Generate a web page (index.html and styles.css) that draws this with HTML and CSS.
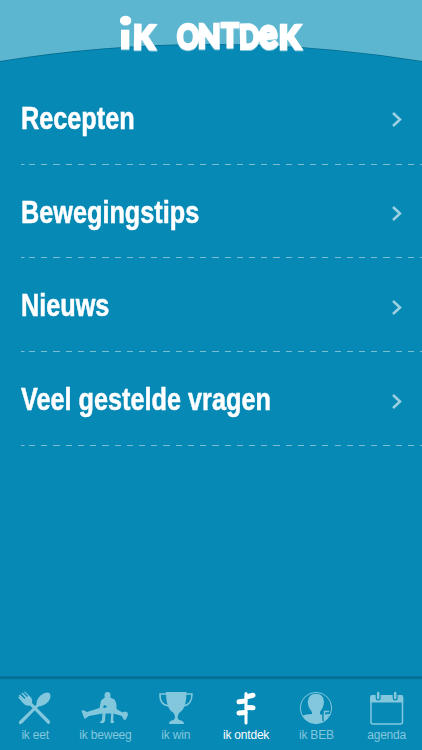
FILE: index.html
```
<!DOCTYPE html>
<html lang="nl">
<head>
<meta charset="utf-8">
<title>ik ontdek</title>
<link rel="stylesheet" href="styles.css">
</head>
<body>
<div class="app">
  <header class="header">
    <svg width="422" height="70" viewBox="0 0 422 70">
      <path class="curve-shadow" d="M0 0H422V61.8Q211 27.8 0 61.8Z"/>
      <path class="curve" d="M0 0H422V61Q211 27 0 61Z"/>
      <g class="title">
        <text transform="translate(120.200 47.8) scale(1.1 .92)">ı</text>
        <text transform="translate(132.800 48.700) rotate(1) scale(.93 .97)">K</text>
        <text transform="translate(177 48.500) scale(.8 .98)">O</text>
        <text transform="translate(197.700 47.500) scale(.87 .95)">N</text>
        <text transform="translate(221.200 46.800) scale(.85 .94)">T</text>
        <text transform="translate(239.300 48.800) rotate(-1) scale(.79 .97)">D</text>
        <text transform="translate(260 48.800) rotate(-5) scale(1.01 1.220)">e</text>
        <text transform="translate(278.700 48.700) scale(.93 .97)">K</text>
        <ellipse cx="125.600" cy="20.500" rx="4.300" ry="3.300"/>
      </g>
    </svg>
  </header>
  <main class="list">
    <div class="row"><span class="label">Recepten</span><svg class="chevron" width="12" height="16"><path d="M2 2L9 8.500L2 15"/></svg></div>
    <div class="row"><span class="label">Bewegingstips</span><svg class="chevron" width="12" height="16"><path d="M2 2L9 8.500L2 15"/></svg></div>
    <div class="row"><span class="label">Nieuws</span><svg class="chevron" width="12" height="16"><path d="M2 2L9 8.500L2 15"/></svg></div>
    <div class="row"><span class="label">Veel gestelde vragen</span><svg class="chevron" width="12" height="16"><path d="M2 2L9 8.500L2 15"/></svg></div>
  </main>
  <nav class="tabs">
    <div class="tab">
      <svg width="48" height="36" viewBox="0 0 48 36">
        <path d="M7.700 4.700L9 3.500L13.500 8L14.500 7L10.500 2.500L11.500 1.500L16 6L17 5L13 1L14 .500L20 6.500Q22 9 21 12L38.500 29.500Q40 31 38.500 32.500Q37.500 33.500 36 32L19 14.500Q14.500 15.500 12 12L7.200 6.500L8.200 5.500L12.500 9.500Z"/>
        <path d="M27.500 15.500L11.500 32Q9.500 34 8 32.500Q7 31 9 29.500L25.500 13.500Q25.500 8 29.500 4.500Q34.500 .500 38.500 2Q41 5 37.500 10.500Q33 15 27.500 15.500Z"/>
      </svg><span>ik eet</span>
    </div>
    <div class="tab">
      <svg width="48" height="36" viewBox="0 0 48 36">
        <path d="M23.800 6.500Q22.500 1 26.500 1Q30.500 1 29.300 6.500L33.500 8.500Q36 12 35.500 18L41.500 21.500L44 20.500L46.500 21.500L47 24L44.500 29L42.500 28.500L41 25L32.500 22.500L32.200 29L33 31V32H29.500L30.200 22.500H24.500L24 30L22.500 32H18.500L21 29L21.500 22.500L8 25L3.500 28L.500 20L2 19L6 21L18.500 17L20 9.500Z"/>
        <path class="cut" d="M23 14L26 15L24.500 17L22 16.500Z"/>
      </svg><span>ik beweeg</span>
    </div>
    <div class="tab">
      <svg width="48" height="36" viewBox="0 0 48 36">
        <path d="M14 1H34.500Q34.500 16 29 20.500Q25.700 22 25.700 27L27 29Q32 29.500 32 33H17Q17 29.500 21.500 29L23 27Q23 22 19.500 20.500Q14 16 14 1Z"/>
        <path class="stroke" d="M15 3H8Q7.500 14 17 15M33.500 3H40Q40 14 31 15"/>
      </svg><span>ik win</span>
    </div>
    <div class="tab active">
      <svg width="48" height="36" viewBox="0 0 48 36">
        <path class="sign" d="M24 2.500V32"/>
        <path class="boards" d="M25 5.700L31 4.200M23 10L17 10.800M25 16.500L31 16.800M23 21.500L17 22"/>
      </svg><span>ik ontdek</span>
    </div>
    <div class="tab">
      <svg width="48" height="36" viewBox="0 0 48 36">
        <circle class="thin" cx="24" cy="17" r="15.700"/>
        <path d="M20 21Q15.500 16 15.800 10.500Q16.500 3 24 2.700Q31.500 3 32 10.500Q32 16 28 21V23.500H37.500Q34 32 24 32.500Q14 32 10.500 25Q12 23.500 20 23Z"/>
        <path class="cutline" d="M31 30V19H36V22"/>
        <path class="tap" d="M32.500 29V20.500H37M35 24H38"/>
      </svg><span>ik BEB</span>
    </div>
    <div class="tab">
      <svg width="48" height="36" viewBox="0 0 48 36">
        <rect class="stroke" x="8" y="5" width="31.500" height="28" rx="2"/>
        <path d="M9 4H38.500Q40.200 4 40.200 6V11.500H7.200V6Q7.200 4 9 4Z"/>
        <g class="ring-gap"><path d="M15.200 3V7M32.200 3V7"/></g>
        <g class="ring"><path d="M15.200 2V7M32.200 2V7"/></g>
      </svg><span>agenda</span>
    </div>
  </nav>
</div>
</body>
</html>
```
FILE: styles.css
```
* { box-sizing: border-box; }
body { margin: 0; }
.app {
  width: 422px;
  height: 750px;
  display: flex;
  flex-direction: column;
  overflow: hidden;
  background: #0689b5;
  font-family: "Liberation Sans", Arial, sans-serif;
}
.header { height: 70px; }
.header svg { display: block; }
.curve { fill: #5cb6d0; }
.curve-shadow { fill: #04698c; }
.title {
  fill: #fff;
  stroke: #fff;
  stroke-width: 2.800px;
  stroke-linejoin: miter;
  font: 900 34px Lato, sans-serif;
  filter: drop-shadow(0 1.500px 0 #82c7da);
}
.list { flex: 1; padding-top: 1px; }
.row {
  height: 93.800px;
  margin-left: 21px;
  padding: 3px 19px 0 0;
  display: flex;
  align-items: center;
  justify-content: space-between;
  background:
    linear-gradient(#78bdd2, #78bdd2) 0 100% / 3.500px 1.200px no-repeat,
    repeating-linear-gradient(90deg, #78bdd2 0 6.200px, transparent 6.200px 12.220px) 8px 100% / 100% 1.200px no-repeat;
}
.label {
  color: #fff;
  font-size: 30.500px;
  font-weight: bold;
  line-height: 36px;
  white-space: nowrap;
  margin-top: -3px;
  -webkit-text-stroke: .5px #fff;
  transform: scaleX(.828);
  transform-origin: left;
}
.chevron { fill: none; stroke: #9dd0e0; stroke-width: 2.500px; }
.tabs {
  height: 74px;
  padding-top: 15px;
  display: grid;
  grid-template-columns: repeat(6, 70.300px);
  background: linear-gradient(#067ba4, #04678a 2px, #0682ac 3px, #0689b5 5px);
}
.tab {
  display: flex;
  flex-direction: column;
  align-items: center;
  color: #83c7dd;
  fill: #83c7dd;
  stroke: none;
  font-size: 12px;
  line-height: 17px;
  letter-spacing: -.2px;
}
.tab svg { flex: none; }
.active { color: #fff; fill: #fff; }
.stroke, .thin { fill: none; stroke: #83c7dd; stroke-width: 1.500px; }
.thin { stroke-width: 1px; }
.cut { fill: #0689b5; }
.cutline { fill: none; stroke: #0689b5; stroke-width: 1.600px; }
.tap { fill: none; stroke: #83c7dd; stroke-width: 1.400px; }
.sign { fill: none; stroke: #fff; stroke-width: 3px; stroke-linecap: round; }
.boards { fill: none; stroke: #fff; stroke-width: 5px; stroke-linecap: round; }
.ring, .ring-gap { fill: none; stroke: #83c7dd; stroke-width: 2.500px; stroke-linecap: round; }
.ring-gap { stroke: #0689b5; stroke-width: 5px; }
```
